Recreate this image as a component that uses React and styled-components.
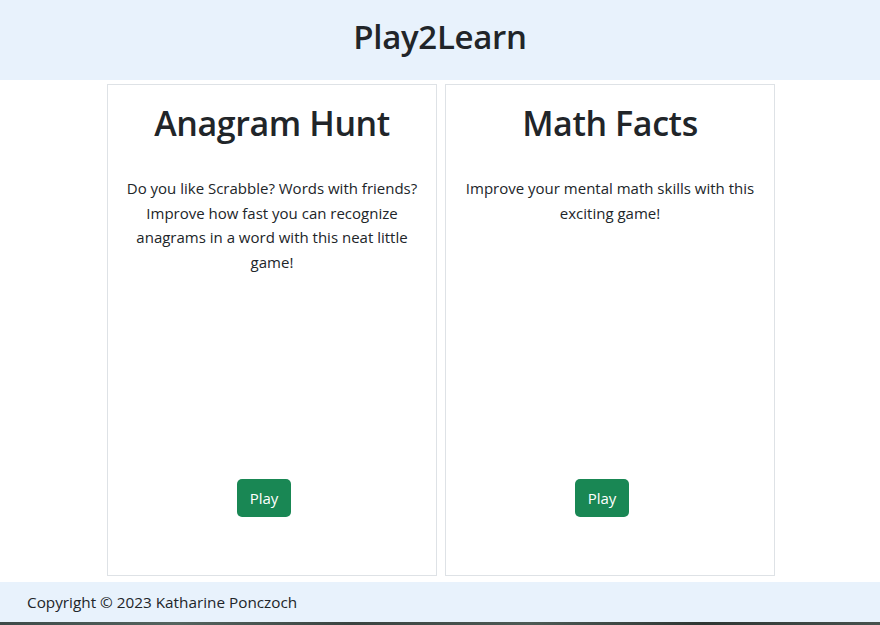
import React from "react";
import styled, { createGlobalStyle } from "styled-components";

const Global = createGlobalStyle`
  html, body { margin: 0; padding: 0; }
  body {
    font-family: "Open Sans", "Noto Sans", sans-serif;
    color: #212529;
    background: #fff;
  }
`;

const Page = styled.div`
  width: 880px;
  height: 625px;
  display: flex;
  flex-direction: column;
  overflow: hidden;
`;

const Header = styled.header`
  height: 80px;
  background: #e8f2fc;
  display: flex;
  align-items: center;
  justify-content: center;
  flex-shrink: 0;
`;

const SiteTitle = styled.h1`
  margin: 0 0 6px;
  font-size: 33px;
  font-weight: 600;
  line-height: 1.2;
  letter-spacing: -0.3px;
`;

const Main = styled.main`
  display: flex;
  justify-content: center;
  gap: 8px;
  padding: 4px 0 0 2px;
  height: 492px;
`;

const Card = styled.section`
  width: 330px;
  box-sizing: border-box;
  border: 1px solid #dee2e6;
  display: flex;
  flex-direction: column;
  align-items: center;
  padding: 17px 14px 0;
  text-align: center;
`;

const CardTitle = styled.h2`
  margin: 0;
  font-size: 34px;
  font-weight: 600;
  line-height: 42px;
  letter-spacing: -0.4px;
`;

const CardText = styled.p`
  margin: 32px 0 0;
  font-size: 15px;
  line-height: 24.5px;
`;

const PlayButton = styled.button`
  margin: auto 16px 58px 0;
  width: 54px;
  height: 38px;
  border: none;
  border-radius: 5px;
  background: #198754;
  color: #fff;
  font-family: inherit;
  font-size: 15px;
  cursor: pointer;
`;

const Footer = styled.footer`
  margin-top: 6px;
  height: 40px;
  background: #e8f2fc;
  display: flex;
  align-items: center;
  padding-left: 27px;
  font-size: 15.3px;
  flex-shrink: 0;
`;

const Strip = styled.div`
  height: 3px;
  background: linear-gradient(90deg, #3d4a48 0%, #55645f 20%, #3a4340 40%, #4d5a55 60%, #2f3633 80%, #47524e 100%);
`;

const games = [
  {
    title: "Anagram Hunt",
    text: "Do you like Scrabble? Words with friends? Improve how fast you can recognize anagrams in a word with this neat little game!",
  },
  {
    title: "Math Facts",
    text: "Improve your mental math skills with this exciting game!",
  },
];

export default function App() {
  return (
    <Page>
      <Global />
      <Header>
        <SiteTitle>Play2Learn</SiteTitle>
      </Header>
      <Main>
        {games.map((g) => (
          <Card key={g.title}>
            <CardTitle>{g.title}</CardTitle>
            <CardText>{g.text}</CardText>
            <PlayButton>Play</PlayButton>
          </Card>
        ))}
      </Main>
      <Footer>Copyright © 2023 Katharine Ponczoch</Footer>
      <Strip />
    </Page>
  );
}
